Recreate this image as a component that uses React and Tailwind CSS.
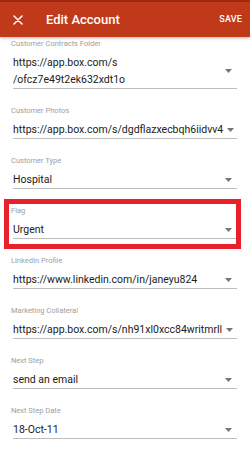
import React from "react";

const fields = [
  { label: "Customer Contracts Folder", lines: ["https://app.box.com/s", "/ofcz7e49t2ek632xdt1o"] },
  { label: "Customer Photos", lines: ["https://app.box.com/s/dgdflazxecbqh6iidvv4"] },
  { label: "Customer Type", lines: ["Hospital"] },
  { label: "Flag", lines: ["Urgent"] },
  { label: "LinkedIn Profile", lines: ["https://www.linkedin.com/in/janeyu824"] },
  { label: "Marketing Collateral", lines: ["https://app.box.com/s/nh91xl0xcc84writmrll"] },
  { label: "Next Step", lines: ["send an email"] },
  { label: "Next Step Date", lines: ["18-Oct-11"] },
];

function Caret() {
  return (
    <svg width="7" height="4" viewBox="0 0 7 4" className="shrink-0">
      <path d="M0 0h7L3.5 4z" fill="#757575" />
    </svg>
  );
}

function Field({ label, lines }) {
  return (
    <div className="mb-[17px]">
      <div className="pl-[11px] text-[7.5px] leading-[10px] text-[#9e9e9e]">{label}</div>
      <div className="mt-[5px] ml-[13px] mr-[13px] flex items-center justify-between border-b border-[#bdbdbd]">
        <div className="text-[10.5px] leading-[17px] text-[#212121] whitespace-nowrap">
          {lines.map((l) => (
            <div key={l}>{l}</div>
          ))}
        </div>
        <div className="pl-1 pr-[5px]">
          <Caret />
        </div>
      </div>
    </div>
  );
}

export default function App() {
  return (
    <div className="w-[250px] h-[455px] overflow-hidden bg-white" style={{ fontFamily: "Roboto, 'Noto Sans', sans-serif" }}>
      <div className="h-[2px] bg-[#a32a10]" />
      <header className="h-[35px] bg-[#c1391b] flex items-center text-white shadow-[0_1px_3px_rgba(0,0,0,0.3)] relative z-10">
        <svg width="10" height="10" viewBox="0 0 10 10" className="ml-[13px]">
          <path d="M1 1L9 9M9 1L1 9" stroke="white" strokeWidth="1.5" strokeLinecap="round" />
        </svg>
        <div className="ml-[23px] text-[13px] font-medium">Edit Account</div>
        <div className="ml-auto mr-[8px] text-[9px] font-medium tracking-[0.02em]">SAVE</div>
      </header>
      <div className="relative pt-[2px]">
        {fields.map((f) => (
          <Field key={f.label} {...f} />
        ))}
        <div className="absolute left-[4px] top-[162px] w-[237px] h-[50px] border-[5px] border-[#e8202a] pointer-events-none" />
      </div>
    </div>
  );
}
